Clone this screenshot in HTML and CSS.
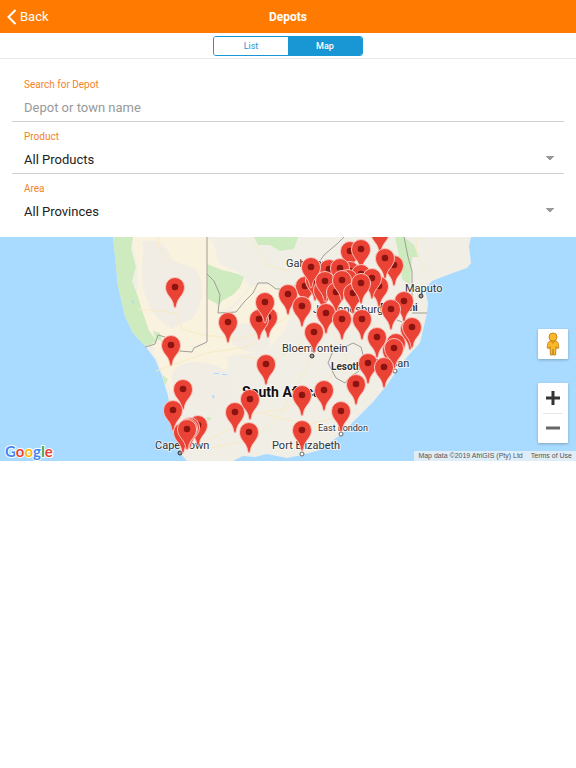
FILE: index.html
```
<!DOCTYPE html>
<html lang="en">
<head>
    <meta charset="UTF-8">
    <meta name="viewport" content="width=device-width, initial-scale=1.0">
    <title>Depots</title>
    <link rel="stylesheet" href="styles.css">
</head>
<body>
    <header class="navbar">
        <button type="button" class="back-btn">
            <svg class="back-icon" viewBox="0 0 10 16" aria-hidden="true"><path d="M8.5 1 1.5 8l7 7"/></svg>
            Back
        </button>
        <h1 class="title">Depots</h1>
    </header>

    <nav class="segment-bar">
        <div class="segment">
            <button type="button" class="segment-btn">List</button>
            <button type="button" class="segment-btn active">Map</button>
        </div>
    </nav>

    <main>
        <form class="filters">
            <div class="field">
                <label for="search">Search for Depot</label>
                <input type="text" id="search" placeholder="Depot or town name">
            </div>
            <div class="field">
                <label for="product">Product</label>
                <select id="product">
                    <option>All Products</option>
                </select>
            </div>
            <div class="field">
                <label for="area">Area</label>
                <select id="area">
                    <option>All Provinces</option>
                </select>
            </div>
        </form>

        <section class="map">
            <svg class="map-canvas" viewBox="0 0 576 224" preserveAspectRatio="xMidYMid slice">
                <defs>
                    <g id="pin">
                        <path class="pin-body" d="M0 21C-1.500 21-1 17-3 13.500-5 9.500-9.500 6.500-9.500 0a9.500 9.500 0 0 1 19 0C9.500 6.500 5 9.500 3 13.500 1 17 1.500 21 0 21z"/>
                        <circle class="pin-dot" r="3.300"/>
                    </g>
                </defs>

                <!-- land -->
                <path class="land" d="M113 0L115 19 118 49 125 79 133 96 145 109 155 122 162 139 168 159 172 186 177 199 180 216 187 224H233L243 219 255 220 267 217 287 221 302 218 320 213 340 198 357 181 373 165 387 148 397 133 407 120 420 106 427 76 428 66 425 52 432 44 450 37 467 31 471 26 469 9 471 0z"/>

                <!-- sand and dry ground -->
                <path class="sand" d="M133 0H207V104C190 112 178 108 166 112 156 116 150 108 146 104 140 84 134 70 138 50 140 30 132 16 133 0z"/>
                <path class="sand" d="M207 37C214 58 216 76 222 76 234 78 240 60 252 50 264 44 280 50 290 56 294 74 288 92 276 104 262 118 240 116 226 120 232 134 220 142 206 140 190 138 184 150 174 158 164 140 160 126 152 114 170 106 190 114 207 106z"/>
                <path class="sand" d="M207 0C220 8 212 20 222 28L240 36 250 50C240 60 230 74 220 74L207 38z"/>
                <path class="scrub" d="M142 6C152 0 162 6 168 14 172 26 180 26 196 32 204 44 204 58 198 72 194 86 182 84 172 92 158 84 148 72 144 54 138 36 146 20 142 6z"/>
                <path class="scrub" d="M232 92C244 80 258 88 268 96 276 108 262 118 248 114 236 112 226 104 232 92z"/>
                <path class="scrub" d="M176 130C190 122 208 124 222 132 238 140 234 160 220 170 204 180 190 168 180 158 170 150 170 138 176 130z"/>

                <path class="park" d="M113 0H133L131 12 136 30 132 44 138 60 143 76 149 94 157 104 150 108 145 109 133 96 125 79 118 49 115 19z"/>
                <path class="park" d="M207 27L222 33 238 37 244 40 240 50 234 57 222 64 219 68 208 62z"/>
                <path class="park" d="M254 0H298L294 12 280 14 270 8 258 8z"/>
                <path class="park" d="M395 0H404L414 8 419 20 412 20 410 48 402 42 400 24z"/>
                <path class="park" d="M153 94L160 96 162 104 156 102zM162 138L168 142 165 148zM206 180L212 181 208 184z"/>

                <!-- roads -->
                <path class="road" d="M158 0C158 20 166 14 170 26M138 72L176 76 182 92 204 98 236 102 262 96 290 78 338 68M156 134L206 116 246 110 262 100M242 116L244 120 274 124 304 104M187 212L219 198 257 176 283 172 307 130 315 98 339 54M206 212L254 202 288 170 316 152 348 124M250 0L268 28 288 34M330 90L350 128 358 158M344 70L380 92 396 98M262 176L306 188 340 180 364 148M416 0C416 20 420 28 430 36"/>

                <!-- borders -->
                <path class="border" d="M207 0V105L194 111 192 115 180 114 172 112 165 100 158 98 155 107 149 109 145 110M207 37L214 44 220 58 218 76 236 75 245 64 253 56 258 46 268 46 276 52 290 52 304 42 316 30 324 18 338 6 344 0M404 0L408 20 412 34V62L410 70M397 83L402 85M412 76H427M328 126L333 114 345 110 353 106 361 110 364 122 359 134 350 140 345 146 336 141z"/>

                <!-- water -->
                <path class="lake" d="M214 136h5v1h-5zM222 137h5v1h-5zM212 158l3 1-2 3zM131 64l3-1v4z"/>

                <g class="places">
                    <text x="286" y="30">Gaborone</text>
                    <text x="405" y="55">Maputo</text>
                    <text x="313" y="76">Johannesburg</text>
                    <text x="380" y="74" class="country">Eswatini</text>
                    <text x="282" y="115">Bloemfontein</text>
                    <text x="374" y="130">Durban</text>
                    <text x="331" y="133" class="country">Lesotho</text>
                    <text x="318" y="194" class="small">East London</text>
                    <text x="272" y="212">Port Elizabeth</text>
                    <text x="155" y="212">Cape Town</text>
                    <text x="242" y="160" class="nation">South Africa</text>
                </g>
                <g class="capitals">
                    <circle cx="421" cy="59" r="2"/>
                    <circle cx="312" cy="119" r="2"/>
                    <circle cx="180" cy="216" r="2"/>
                </g>
                <g class="towns">
                    <circle cx="395" cy="134" r="2"/>
                    <circle cx="341" cy="197" r="2"/>
                    <circle cx="302" cy="217" r="2"/>
                </g>

                <!-- depots, north to south -->
                <g class="pins">
                    <use href="#pin" x="380" y="-5"/>
                    <use href="#pin" x="350" y="14"/>
                    <use href="#pin" x="361" y="12"/>
                    <use href="#pin" x="394" y="28"/>
                    <use href="#pin" x="385" y="21"/>
                    <use href="#pin" x="350" y="34"/>
                    <use href="#pin" x="361" y="37"/>
                    <use href="#pin" x="329" y="32"/>
                    <use href="#pin" x="340" y="31"/>
                    <use href="#pin" x="379" y="49"/>
                    <use href="#pin" x="372" y="41"/>
                    <use href="#pin" x="348" y="42"/>
                    <use href="#pin" x="305" y="49"/>
                    <use href="#pin" x="315" y="43"/>
                    <use href="#pin" x="311" y="30"/>
                    <use href="#pin" x="175" y="50"/>
                    <use href="#pin" x="323" y="53"/>
                    <use href="#pin" x="325" y="44"/>
                    <use href="#pin" x="336" y="55"/>
                    <use href="#pin" x="342" y="43"/>
                    <use href="#pin" x="353" y="56"/>
                    <use href="#pin" x="361" y="46"/>
                    <use href="#pin" x="288" y="57"/>
                    <use href="#pin" x="302" y="69"/>
                    <use href="#pin" x="268" y="80"/>
                    <use href="#pin" x="259" y="82"/>
                    <use href="#pin" x="265" y="65"/>
                    <use href="#pin" x="404" y="64"/>
                    <use href="#pin" x="391" y="72"/>
                    <use href="#pin" x="326" y="76"/>
                    <use href="#pin" x="342" y="82"/>
                    <use href="#pin" x="362" y="82"/>
                    <use href="#pin" x="228" y="85"/>
                    <use href="#pin" x="410" y="92"/>
                    <use href="#pin" x="412" y="90"/>
                    <use href="#pin" x="314" y="95"/>
                    <use href="#pin" x="377" y="100"/>
                    <use href="#pin" x="396" y="106"/>
                    <use href="#pin" x="392" y="113"/>
                    <use href="#pin" x="394" y="111"/>
                    <use href="#pin" x="171" y="108"/>
                    <use href="#pin" x="266" y="127"/>
                    <use href="#pin" x="368" y="126"/>
                    <use href="#pin" x="384" y="130"/>
                    <use href="#pin" x="356" y="147"/>
                    <use href="#pin" x="324" y="153"/>
                    <use href="#pin" x="183" y="152"/>
                    <use href="#pin" x="302" y="158"/>
                    <use href="#pin" x="250" y="162"/>
                    <use href="#pin" x="173" y="173"/>
                    <use href="#pin" x="235" y="175"/>
                    <use href="#pin" x="341" y="174"/>
                    <use href="#pin" x="198" y="188"/>
                    <use href="#pin" x="183" y="195"/>
                    <use href="#pin" x="190" y="190"/>
                    <use href="#pin" x="188" y="191"/>
                    <use href="#pin" x="187" y="192"/>
                    <use href="#pin" x="302" y="193"/>
                    <use href="#pin" x="249" y="195"/>
                </g>
            </svg>

            <div class="map-controls">
                <button type="button" class="pegman" aria-label="Street View">
                    <svg viewBox="0 0 16 24" aria-hidden="true">
                        <path d="M4 9.500c2-1 6-1 8 0 1 .5 1.500 3 1.800 6.500l-2 .5-.8-2-.5 8.500H8.400L8 17l-.4 6H5.500L5 14.500l-.8 2-2-.5C2.500 12.500 3 10 4 9.500z"/>
                        <circle cx="8" cy="5" r="4"/>
                        <path class="pegman-collar" d="M5 9l3 3 3-3"/>
                    </svg>
                </button>
                <div class="zoom">
                    <button type="button" class="zoom-btn" aria-label="Zoom in">
                        <svg viewBox="0 0 14 14" aria-hidden="true"><path d="M7 0v14M0 7h14"/></svg>
                    </button>
                    <button type="button" class="zoom-btn zoom-out" aria-label="Zoom out">
                        <svg viewBox="0 0 14 14" aria-hidden="true"><path d="M0 7h14"/></svg>
                    </button>
                </div>
            </div>

            <a href="#" class="google-logo"><span class="blue">G</span><span class="red">o</span><span class="yellow">o</span><span class="blue">g</span><span class="green">l</span><span class="red">e</span></a>

            <div class="map-legal">
                <span>Map data ©2019 AfriGIS (Pty) Ltd</span>
                <a href="#">Terms of Use</a>
            </div>
        </section>
    </main>
</body>
</html>
```
FILE: styles.css
```
* {
    box-sizing: border-box;
}

body {
    margin: 0;
    font-family: Roboto, "Liberation Sans", sans-serif;
    color: #222;
    background-color: #fff;
}

button, input, select {
    font-family: inherit;
}

.navbar {
    display: grid;
    grid-template-columns: 1fr auto 1fr;
    align-items: center;
    height: 33px;
    padding: 0 7px;
    background-color: #ff7a00;
    color: #fff;
}

.back-btn {
    display: flex;
    align-items: center;
    justify-self: start;
    gap: 3px;
    padding: 0;
    border: none;
    background: none;
    color: #fff;
    font-size: 13px;
    cursor: pointer;
}

.back-icon {
    width: 10px;
    height: 16px;
    fill: none;
    stroke: #fff;
    stroke-width: 2;
}

.title {
    margin: 0;
    font-size: 12px;
    font-weight: 700;
}

.segment-bar {
    display: flex;
    justify-content: center;
    padding: 3px 0 2px;
    border-bottom: 1px solid #e8e8e8;
}

.segment {
    display: flex;
    width: 150px;
    height: 20px;
    border: 1px solid #1897d4;
    border-radius: 3px;
    overflow: hidden;
}

.segment-btn {
    flex: 1;
    padding: 0;
    border: none;
    background-color: #fff;
    color: #1897d4;
    font-size: 9px;
    cursor: pointer;
}

.segment-btn.active {
    background-color: #1897d4;
    color: #fff;
    font-weight: 500;
}

.filters {
    padding: 11px 12px 0;
}

.field {
    display: flex;
    flex-direction: column;
    height: 52px;
    padding: 8px 10px 0 12px;
    border-bottom: 1px solid #d0d0d0;
}

.field:last-child {
    border-bottom: none;
    height: 63px;
}

.field label {
    color: #f5831f;
    font-size: 10px;
    line-height: 14px;
}

.field input, .field select {
    width: 100%;
    height: 20px;
    margin-top: 5px;
    padding: 0;
    border: none;
    outline: none;
    background-color: transparent;
    color: #222;
    font-size: 13px;
}

.field input::placeholder {
    color: #999;
}

.field select {
    appearance: none;
    background-image: conic-gradient(from -45deg at 50% 100%, #999 90deg, transparent 0);
    background-position: right 0 top 7px;
    background-size: 8px 4px;
    background-repeat: no-repeat;
}

.map {
    position: relative;
    background-color: #a9daff;
    overflow: hidden;
}

.map-canvas {
    display: block;
    width: 100%;
    min-height: 224px;
}

.land {
    fill: #f1eee6;
}

.sand {
    fill: #f9f2de;
}

.scrub {
    fill: #f1ede4;
}

.park {
    fill: #cdebbf;
}

.lake {
    fill: #a9daff;
}

.road {
    fill: none;
    stroke: #f8ebc4;
}

.border {
    fill: none;
    stroke: #a09e98;
}

.places {
    font-size: 11px;
    fill: #333;
    stroke: #fff;
    stroke-width: 2px;
    stroke-opacity: 0.6;
    paint-order: stroke;
}

.places .small {
    font-size: 9px;
}

.places .country {
    font-size: 10px;
    font-weight: 700;
}

.places .nation {
    font-size: 14px;
    font-weight: 700;
    fill: #111;
}

.capitals {
    fill: #999;
    stroke: #333;
}

.towns {
    fill: #fff;
    stroke: #666;
}

.pin-body {
    fill: #ea4335;
    stroke: #fbc4bd;
    stroke-width: 1px;
}

.pin-dot {
    fill: #8c1410;
}

.map-controls {
    position: absolute;
    right: 8px;
    bottom: 18px;
    display: flex;
    flex-direction: column;
    gap: 24px;
}

.pegman, .zoom {
    width: 30px;
    background-color: #fff;
    border: none;
    border-radius: 1px;
    box-shadow: 0 1px 3px rgba(0, 0, 0, 0.25);
}

.pegman {
    display: flex;
    align-items: center;
    justify-content: center;
    height: 30px;
    padding: 0;
    cursor: pointer;
}

.pegman svg {
    width: 16px;
    height: 24px;
    fill: #fbb829;
    stroke: #c48a1c;
}

.pegman .pegman-collar {
    fill: #e58f1a;
    stroke: none;
}

.zoom-btn {
    display: flex;
    align-items: center;
    justify-content: center;
    width: 100%;
    height: 30px;
    padding: 0;
    border: none;
    background: none;
    cursor: pointer;
}

.zoom-btn svg {
    width: 14px;
    height: 14px;
    stroke: #333;
    stroke-width: 3;
}

.zoom-out {
    background: linear-gradient(#e6e6e6, #e6e6e6) center top / 20px 1px no-repeat;
}

.zoom-out svg {
    stroke: #666;
}

.google-logo {
    position: absolute;
    left: 5px;
    bottom: 0;
    font-family: Lato, sans-serif;
    font-size: 15px;
    font-weight: 700;
    line-height: 20px;
    text-decoration: none;
    -webkit-text-stroke: 2px #fff;
    paint-order: stroke fill;
}

.blue {
    color: #4285f4;
}

.red {
    color: #ea4335;
}

.yellow {
    color: #fbbc05;
}

.green {
    color: #34a853;
}

.map-legal {
    position: absolute;
    right: 0;
    bottom: 0;
    display: flex;
    gap: 8px;
    padding: 0 4px;
    background-color: rgba(245, 245, 245, 0.7);
    color: #555;
    font-family: "Liberation Sans", sans-serif;
    font-size: 7px;
    line-height: 10px;
}

.map-legal a {
    color: #555;
    text-decoration: none;
}
```
